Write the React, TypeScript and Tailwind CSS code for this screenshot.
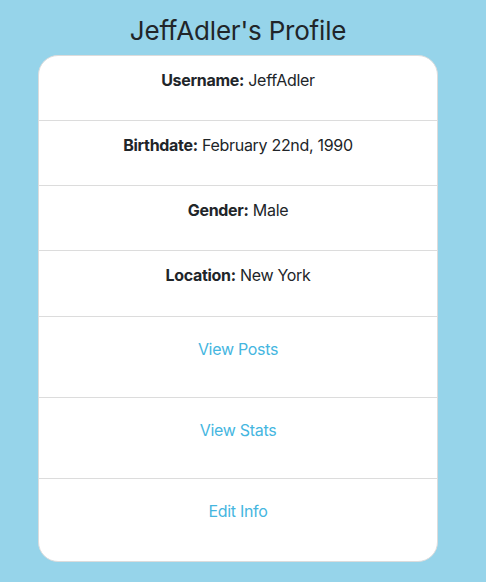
const details = [
  { label: "Username", value: "JeffAdler" },
  { label: "Birthdate", value: "February 22nd, 1990" },
  { label: "Gender", value: "Male" },
  { label: "Location", value: "New York" },
];

const links = ["View Posts", "View Stats", "Edit Info"];

export default function App() {
  return (
    <div className="min-h-[582px] bg-[#96d4ea] font-['Inter',sans-serif] text-[#212529]">
      <div className="ml-[38px] w-[400px] pt-[14px]">
        <h2 className="text-center text-[26px] leading-[33px] tracking-[-0.2px] mb-[8px]">
          JeffAdler's Profile
        </h2>
        <div className="bg-white rounded-[20px] border border-[#dcdcdc] overflow-hidden">
          {details.map((d, i) => (
            <div
              key={d.label}
              className={`px-5 pt-3 border-b border-[#dcdcdc] text-center text-base leading-6 tracking-[-0.3px] ${
                i === details.length - 1 ? "pb-[13px]" : "pb-3"
              }`}
            >
              <p className="mb-4">
                <span className="font-bold">{d.label}:</span> {d.value}
              </p>
            </div>
          ))}
          {links.map((l, i) => (
            <div
              key={l}
              className={`px-5 pt-3 text-center ${
                i < links.length - 1
                  ? "border-b border-[#dcdcdc] pb-3"
                  : "pb-[14px]"
              }`}
            >
              <p className="mb-4">
                <a className="inline-block py-2 text-base leading-6 tracking-[-0.3px] text-[#45b6df] cursor-pointer">
                  {l}
                </a>
              </p>
            </div>
          ))}
        </div>
      </div>
    </div>
  );
}
